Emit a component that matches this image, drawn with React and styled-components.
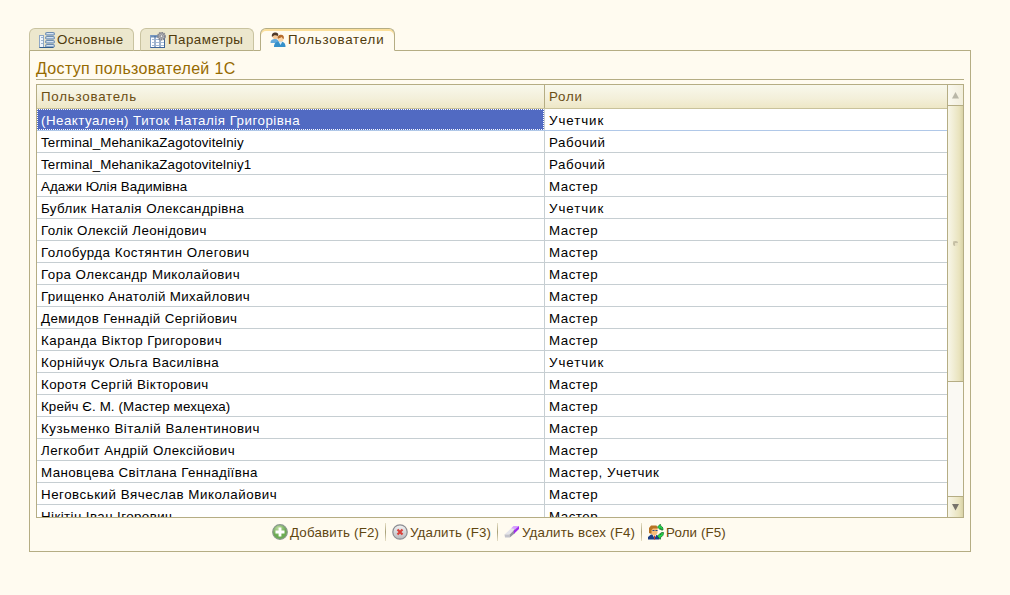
import React from "react";
import styled, { createGlobalStyle, css } from "styled-components";

const line = "#b5ad84";
const brown = "#4f3a0c";

const Global = createGlobalStyle`
  * { box-sizing: border-box; }
  body {
    margin: 0;
    background: #fffbf0;
    font-family: "Liberation Sans", Arial, sans-serif;
    font-size: 13.33px;
    color: #000;
  }
`;

const Page = styled.main`
  width: 1010px;
  height: 595px;
  padding: 28px 39px 0 29px;
  overflow: hidden;
`;

const Tabs = styled.nav`
  display: flex;
  align-items: flex-end;
  gap: 6px;
  height: 23px;
  margin-bottom: -1px;
  position: relative;
`;

const Tab = styled.button`
  display: flex;
  align-items: center;
  gap: 2px;
  width: ${(p) => p.$width}px;
  height: 23px;
  padding: 0 0 0 9px;
  border: 1px solid #c9c3a0;
  border-bottom-color: ${line};
  border-radius: 6px 6px 0 0;
  background: #ece7cd;
  color: ${brown};
  font: inherit;
  ${(p) =>
    p.$active &&
    css`
      border-color: ${line};
      border-bottom-color: #fffbf0;
      background: #fffbf0;
      box-shadow: inset 0 2px #fbdf9b;
    `}
`;

const Label = styled.span`
  white-space: nowrap;
  letter-spacing: ${(p) => p.$spacing || 0}px;
`;

const Panel = styled.section`
  width: 942px;
  height: 502px;
  padding: 6px;
  border: 1px solid ${line};
`;

const Title = styled.h1`
  height: 23px;
  margin: 0 0 4px;
  border-bottom: 1px solid ${line};
  color: #966a00;
  font-size: 16px;
  font-weight: 400;
  line-height: 24px;
  white-space: nowrap;
`;

const Table = styled.div`
  display: flex;
  width: 928px;
  height: 434px;
  border: 1px solid ${line};
  background: #fff;
  overflow: hidden;
`;

const Grid = styled.div`
  width: 910px;
  overflow: hidden;
`;

const columns = css`
  display: grid;
  grid-template-columns: 508px 402px;
`;

const Header = styled.div`
  ${columns}
  height: 24px;
  border-bottom: 1px solid #c9c29b;
  background: linear-gradient(#f8f8ec, #f3efd9 60%, #eee7c6);
  color: #6b4e14;
`;

const HeadCell = styled.div`
  padding-left: 4px;
  line-height: 23px;
  border-right: ${(p) => (p.$last ? "0" : `1px solid ${line}`)};
`;

const Row = styled.div`
  ${columns}
  height: 22px;
  border-bottom: 1px solid ${(p) => (p.$selected ? "#b0c8e8" : "#c6ced2")};
`;

const Cell = styled.div`
  padding-left: 4px;
  line-height: 24px;
  height: 21px;
  white-space: nowrap;
  border-right: ${(p) => (p.$last ? "0" : "1px solid #c6ced2")};
  ${(p) =>
    p.$selected &&
    css`
      height: 21px;
      border-right: 0;
      margin-right: 1px;
      background: #516ac2;
      color: #fff;
      outline: 1px dotted #fff;
      outline-offset: -1px;
      box-shadow: 1px 0 #c6ced2;
    `}
`;

const Scroll = styled.div`
  display: flex;
  flex-direction: column;
  width: 16px;
  border-left: 1px solid ${line};
  background: #faf9f3;
`;

const barFill = "linear-gradient(90deg, #f8f6e8, #efebcf 45%, #e9e3bd 75%, #d9d2a6)";

const ScrollButton = styled.div`
  display: flex;
  align-items: center;
  justify-content: center;
  height: ${(p) => (p.$down ? 21 : 20)}px;
  border-top: ${(p) => (p.$down ? `1px solid ${line}` : "0")};
  background: ${(p) => (p.$down ? barFill : "linear-gradient(90deg, #faf9f0, #f1edda)")};
`;

const Thumb = styled.div`
  display: flex;
  align-items: center;
  justify-content: center;
  height: 277px;
  border: solid ${line};
  border-width: 1px 0;
  background: ${barFill};
`;

const Grip = styled.i`
  width: 5px;
  height: 5px;
  border: solid #c5bfa4;
  border-width: 2px 0 0 2px;
  background: #e6e0c2;
  border-radius: 2px;
`;

const Track = styled.div`
  flex: 1;
`;

const Commands = styled.div`
  display: flex;
  align-items: center;
  height: 16px;
  margin-top: 6px;
  padding-left: 236px;
`;

const Command = styled.button`
  display: flex;
  align-items: center;
  gap: 2px;
  width: ${(p) => p.$width}px;
  height: 16px;
  padding: 0;
  border: 0;
  background: none;
  color: #5f4610;
  font: inherit;
`;

const Divider = styled.i`
  width: 1px;
  height: 18px;
  margin-right: 6px;
  background: linear-gradient(#e6dfc6, #a8a078, #e6dfc6);
`;

const Icon = styled.svg.attrs({ width: 16, height: 16, viewBox: "0 0 16 16" })`
  flex: none;
`;

const FormIcon = () => (
  <Icon>
    <rect x="0.5" y="3.5" width="4" height="12" fill="#eef4fb" stroke="#8ea7c6" />
    <path d="M2 5.5h2M2 8.5h2M2 11.5h2" stroke="#9fb6d0" />
    {[0, 4, 8, 12].map((y) => (
      <g key={y}>
        <rect x="6.5" y={y + 0.5} width="9" height="2.6" rx="1" fill="#a9c1dd" stroke="#6c8caf" />
        <path d={`M8 ${y + 1.5}h6`} stroke="#d7e4f1" />
      </g>
    ))}
    <path d="M.5 15.5h14" stroke="#315d8d" />
  </Icon>
);

const ParamsIcon = () => (
  <Icon>
    <rect x="0.5" y="3.5" width="14" height="12" fill="#fff" stroke="#7e9dc5" />
    <path d="M1 4.5h13" stroke="#6f8fb6" strokeWidth="2" />
    <path d="M5 4v11M10 4v11M14.5 6v10M.5 15.5h14" stroke="#3f6599" />
    <path d="M2 7.5h2M6 7.5h3M2 10.5h2M6 10.5h3M11 10.5h3M2 13.5h2M6 13.5h3M11 13.5h3" stroke="#a5bbd8" />
    <circle cx="11.5" cy="4.2" r="3.4" fill="#b9b9bd" stroke="#85858c" strokeWidth="2" strokeDasharray="1.6 .6" />
    <circle cx="11.5" cy="4.2" r="1.4" fill="#eee" stroke="#86868d" />
  </Icon>
);

const UsersIcon = () => (
  <Icon>
    <path d="M.5 11c0-3 1.500-4 4.500-4s4 2 4 4z" fill="#62a9dc" />
    <circle cx="5.300" cy="4.200" r="2.800" fill="#f3c797" />
    <path d="M2 5C1 1.500 4 .2 6 .6c2.200.2 2.700 1.900 2 3.400C6 3 4 2.500 2 5z" fill="#4f3929" />
    <path d="M4 15C4 11 6 9.500 9.800 9.500S15.500 11 15.500 15z" fill="#3590ca" />
    <path d="M8.500 9.500l2 3.500 2-3.500z" fill="#d8edf9" />
    <circle cx="10.700" cy="6.700" r="2.900" fill="#fbd5a6" />
    <path d="M7.800 7C7.200 3.800 9 2.800 11 2.800c2.400 0 3.400 1.700 2.700 4.200-1-.2-1.500-1.400-2-2-1 .9-2.300.8-3.900 2z" fill="#b66c2d" />
  </Icon>
);

const AddIcon = () => (
  <Icon>
    <defs>
      <radialGradient id="add" cx=".4" cy=".25">
        <stop stopColor="#c0dca3" />
        <stop offset="1" stopColor="#6bab52" />
      </radialGradient>
    </defs>
    <circle cx="8" cy="8" r="7.3" fill="url(#add)" stroke="#8a998c" strokeWidth="1.2" />
    <path d="M8 3.500v9M3.500 8h9" stroke="#fff" strokeWidth="2.8" />
  </Icon>
);

const DeleteIcon = () => (
  <Icon>
    <defs>
      <linearGradient id="del" x2="0" y2="1">
        <stop stopColor="#f3f3f3" />
        <stop offset="1" stopColor="#b9b9bd" />
      </linearGradient>
    </defs>
    <circle cx="8" cy="8" r="7.2" fill="url(#del)" stroke="#8c8c91" strokeWidth="1.2" />
    <path d="M5.5 5.5l5 5M10.5 5.5l-5 5" stroke="#d9413a" strokeWidth="2.2" />
  </Icon>
);

const EraserIcon = () => (
  <Icon>
    <path d="M.5 10.500L7 4.500h4.500L5.800 10.500z" fill="#e4e4ea" />
    <path d="M.5 10.500h5.300v3H1z" fill="#c2c2ca" />
    <path d="M5.800 10.500l5.200-5.500v4l-5.200 4.500z" fill="#9494a0" />
    <path d="M7 4.500L9.500 2h5.500l-3.200 3z" fill="#d6a0ff" />
    <path d="M9.800 6.500L15 2v3l-5.200 5z" fill="#a02cec" />
  </Icon>
);

const RolesIcon = () => (
  <Icon>
    <path d="M0 15.500v-2.500l3-2.500h5l3.500 2.500v2.500z" fill="#183c86" />
    <path d="M4.500 10.500l2 4 2-4z" fill="#fff" />
    <path d="M6.500 11.500v4" stroke="#cb3428" />
    <path d="M3 3.500h6.500v5.500l-2 2.500H5L3 9z" fill="#f8bd79" />
    <path d="M1 9V4l2-2.500h5.500l1.500 3H5L3.500 6v4z" fill="#b87324" />
    <path d="M4.500 6.500h2M7.500 6.500h2" stroke="#254785" />
    <path d="M9.500 3l2.800-2.800v1.600c1.800.4 2.700 1.500 2.700 4.200h-1.800c0-1.200-.2-1.700-.9-2v1.800z" fill="#22d94b" stroke="#07651e" strokeWidth=".7" />
    <path d="M15.500 8.500c0 2.500-1 4.200-3 4.700v2L9.300 12.200l3.200-3v1.700c.7-.4 1-1.200 1-2.400z" fill="#24df49" stroke="#07651e" strokeWidth=".7" />
  </Icon>
);

const Arrow = ({ down }) => (
  <svg width="9" height="8" viewBox="0 0 9 8">
    <path d={down ? "M1 1h7L4.500 7.500z" : "M1 7.500h7L4.500 1z"} fill={down ? "#77736a" : "#b9b7a8"} />
  </svg>
);

const users = [
  ["(Неактуален) Титок Наталія Григорівна", "Учетчик", 0.49],
  ["Terminal_MehanikaZagotovitelniy", "Рабочий", 0.16],
  ["Terminal_MehanikaZagotovitelniy1", "Рабочий", 0.16],
  ["Адажи Юлія Вадимівна", "Мастер", 0.1],
  ["Бублик Наталія Олександрівна", "Учетчик", 0.42],
  ["Голік Олексій Леонідович", "Мастер", 0.39],
  ["Голобурда Костянтин Олегович", "Мастер", 0.5],
  ["Гора Олександр Миколайович", "Мастер", 0.46],
  ["Грищенко Анатолій Михайлович", "Мастер", 0.36],
  ["Демидов Геннадій Сергійович", "Мастер", 0.41],
  ["Каранда Віктор Григорович", "Мастер", 0.52],
  ["Корнійчук Ольга Василівна", "Учетчик", 0.44],
  ["Коротя Сергій Вікторович", "Мастер", 0.42],
  ["Крейч Є. М. (Мастер мехцеха)", "Мастер", 0.11],
  ["Кузьменко Віталій Валентинович", "Мастер", 0.49],
  ["Легкобит Андрій Олексійович", "Мастер", 0.44],
  ["Мановцева Світлана Геннадіївна", "Мастер, Учетчик", 0.4],
  ["Неговський Вячеслав Миколайович", "Мастер", 0.52],
  ["Нікітін Іван Ігорович", "Мастер", 0.42],
];

const roleSpacing = {
  "Учетчик": 0.93,
  "Рабочий": 0.6,
  "Мастер": 0.5,
  "Мастер, Учетчик": 0.55,
};

export default function App() {
  return (
    <Page>
      <Global />
      <Tabs>
        <Tab $width={105}><FormIcon /><Label $spacing={0.42}>Основные</Label></Tab>
        <Tab $width={114}><ParamsIcon /><Label $spacing={0.48}>Параметры</Label></Tab>
        <Tab $width={135} $active><UsersIcon /><Label $spacing={0.78}>Пользователи</Label></Tab>
      </Tabs>
      <Panel>
        <Title><Label $spacing={0.33}>Доступ пользователей 1С</Label></Title>
        <Table>
          <Grid>
            <Header>
              <HeadCell><Label $spacing={0.78}>Пользователь</Label></HeadCell>
              <HeadCell $last><Label $spacing={0.8}>Роли</Label></HeadCell>
            </Header>
            {users.map(([name, role, spacing], i) => (
              <Row key={name} $selected={i === 0}>
                <Cell $selected={i === 0}><Label $spacing={spacing}>{name}</Label></Cell>
                <Cell $last><Label $spacing={roleSpacing[role]}>{role}</Label></Cell>
              </Row>
            ))}
          </Grid>
          <Scroll>
            <ScrollButton><Arrow /></ScrollButton>
            <Thumb><Grip /></Thumb>
            <Track />
            <ScrollButton $down><Arrow down /></ScrollButton>
          </Scroll>
        </Table>
        <Commands>
          <Command $width={113}><AddIcon /><Label $spacing={0.16}>Добавить (F2)</Label></Command>
          <Divider />
          <Command $width={105}><DeleteIcon /><Label $spacing={0.18}>Удалить (F3)</Label></Command>
          <Divider />
          <Command $width={137}><EraserIcon /><Label $spacing={0.18}>Удалить всех (F4)</Label></Command>
          <Divider />
          <Command $width={90}><RolesIcon /><Label $spacing={0.12}>Роли (F5)</Label></Command>
        </Commands>
      </Panel>
    </Page>
  );
}
